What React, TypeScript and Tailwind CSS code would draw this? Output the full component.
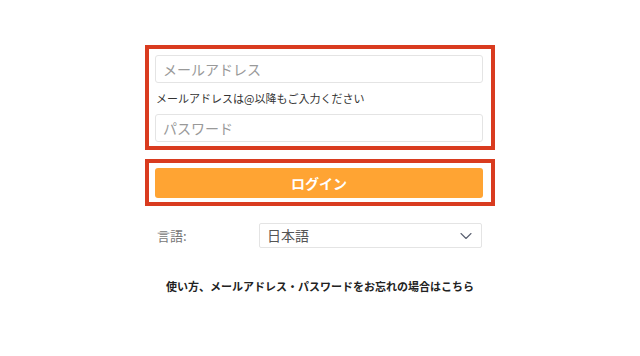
import { ChevronDown } from 'lucide-react'

export default function App() {
  return (
    <div
      className="w-[640px] h-[356px] bg-white flex flex-col items-center"
      style={{ fontFamily: '"Noto Sans CJK JP", "Noto Sans", sans-serif' }}
    >
      <div className="mt-[45px] w-[350px] border-4 border-[#d93b1f] pt-[6px] pb-[4px] pl-[6px] pr-[8px]">
        <input
          className="w-full h-[28px] border border-[#e4e4e4] rounded-[3px] px-[7px] text-[14px] text-[#555] placeholder-[#999] outline-none"
          placeholder="メールアドレス"
        />
        <p className="h-[31px] flex items-center pl-[1px] text-[11px] text-[#333] leading-none">
          メールアドレスは@以降もご入力ください
        </p>
        <input
          type="password"
          className="w-full h-[28px] border border-[#e4e4e4] rounded-[3px] px-[7px] text-[14px] text-[#555] placeholder-[#999] outline-none"
          placeholder="パスワード"
        />
      </div>

      <div className="mt-[9px] w-[350px] border-4 border-[#d93b1f] pt-[5px] pb-[4px] pl-[6px] pr-[8px]">
        <button className="w-full h-[30px] rounded-[3px] bg-[#ffa433] text-white text-[14px] font-bold">
          ログイン
        </button>
      </div>

      <div className="mt-[17px] w-[350px] flex items-center pl-[12px] pr-[13px]">
        <span className="w-[102px] text-[13px] text-[#777]">言語:</span>
        <div className="flex-1 h-[25px] border border-[#e4e4e4] rounded-[2px] flex items-center justify-between pl-[7px] pr-[5px]">
          <span className="text-[14px] text-[#555]">日本語</span>
          <ChevronDown className="w-[20px] h-[20px] text-[#5a6070]" strokeWidth={1.3} />
        </div>
      </div>

      <p className="mt-[30px] text-[11px] font-bold text-[#222]">
        使い方、メールアドレス・パスワードをお忘れの場合はこちら
      </p>
    </div>
  )
}
